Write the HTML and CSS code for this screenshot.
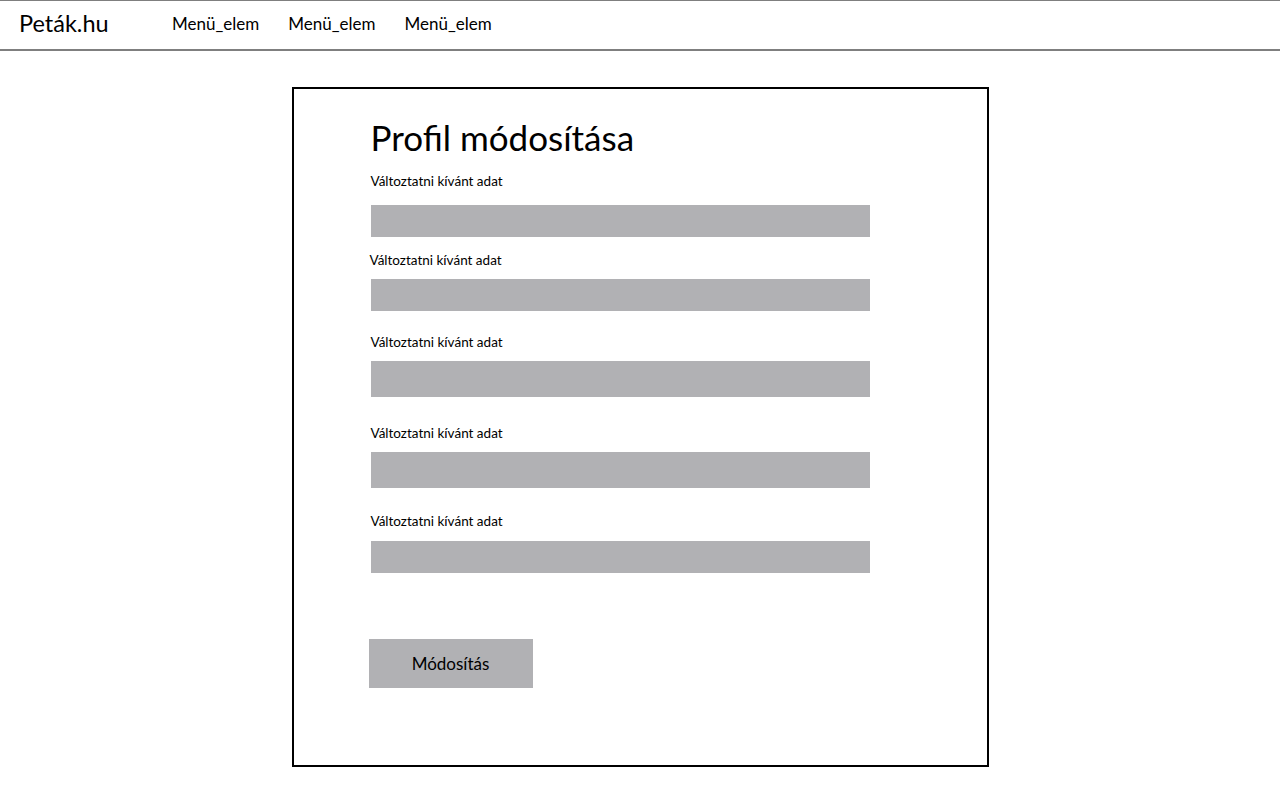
FILE: index.html
```html
<!DOCTYPE html>
<html lang="hu">
<head>
<meta charset="utf-8">
<title>Profil módosítása</title>
<link rel="stylesheet" href="styles.css">
</head>
<body>
<header class="navbar">
  <a class="brand" href="#">Peták.hu</a>
  <nav class="menu">
    <a class="menu-item" href="#">Menü_elem</a>
    <a class="menu-item" href="#">Menü_elem</a>
    <a class="menu-item" href="#">Menü_elem</a>
  </nav>
</header>
<main class="page">
  <section class="card">
    <h1 class="title">Profil módosítása</h1>
    <form class="form">
      <div class="field field-1">
        <label class="label">Változtatni kívánt adat</label>
        <input class="input" type="text">
      </div>
      <div class="field field-2">
        <label class="label label-shift">Változtatni kívánt adat</label>
        <input class="input" type="text">
      </div>
      <div class="field field-3">
        <label class="label">Változtatni kívánt adat</label>
        <input class="input input-tall" type="text">
      </div>
      <div class="field field-4">
        <label class="label">Változtatni kívánt adat</label>
        <input class="input input-tall" type="text">
      </div>
      <div class="field field-5">
        <label class="label">Változtatni kívánt adat</label>
        <input class="input" type="text">
      </div>
      <button class="button" type="button">Módosítás</button>
    </form>
  </section>
</main>
</body>
</html>
```

FILE: styles.css
```css
* { box-sizing: border-box; }
html, body { margin: 0; padding: 0; background: #fff; }
body {
  font-family: "Lato", "Liberation Sans", sans-serif;
  color: #000;
}
.navbar {
  display: flex;
  align-items: center;
  height: 51px;
  border-top: 1px solid #7f7f7f;
  border-bottom: 2px solid #7f7f7f;
  padding-left: 19px;
  padding-bottom: 4px;
}
.brand {
  font-size: 23.5px;
  color: #000;
  text-decoration: none;
  width: 153px;
}
.menu {
  display: flex;
  gap: 29px;
}
.menu-item {
  font-size: 17px;
  color: #000;
  text-decoration: none;
}
.page {
  display: flex;
  justify-content: center;
  padding-top: 36px;
}
.card {
  width: 697px;
  height: 680px;
  border: 2px solid #000;
  padding: 26px 0 0 77px;
}
.title {
  margin: 0;
  font-size: 35px;
  font-weight: 400;
  line-height: 44px;
}
.form {
  display: flex;
  flex-direction: column;
  align-items: flex-start;
}
.field {
  display: flex;
  flex-direction: column;
  align-items: flex-start;
}
.label {
  font-size: 13.5px;
  line-height: 16px;
}
.label-shift { margin-left: -1px; }
.input {
  width: 499px;
  height: 32px;
  border: 0;
  background: #b1b1b4;
  margin: 11px 0 0;
  padding: 0;
}
.input-tall { height: 36px; }
.field-1 { margin-top: 14px; }
.field-1 .input { margin-top: 16px; }
.field-2 { margin-top: 15px; }
.field-3 { margin-top: 23px; }
.field-4 { margin-top: 28px; }
.field-5 { margin-top: 25px; }
.field-5 .input { margin-top: 12px; }
.button {
  margin-top: 66px;
  margin-left: -2px;
  width: 164px;
  height: 49px;
  border: 0;
  background: #b1b1b4;
  font-family: inherit;
  font-size: 17px;
  color: #000;
  padding: 0;
}
```
